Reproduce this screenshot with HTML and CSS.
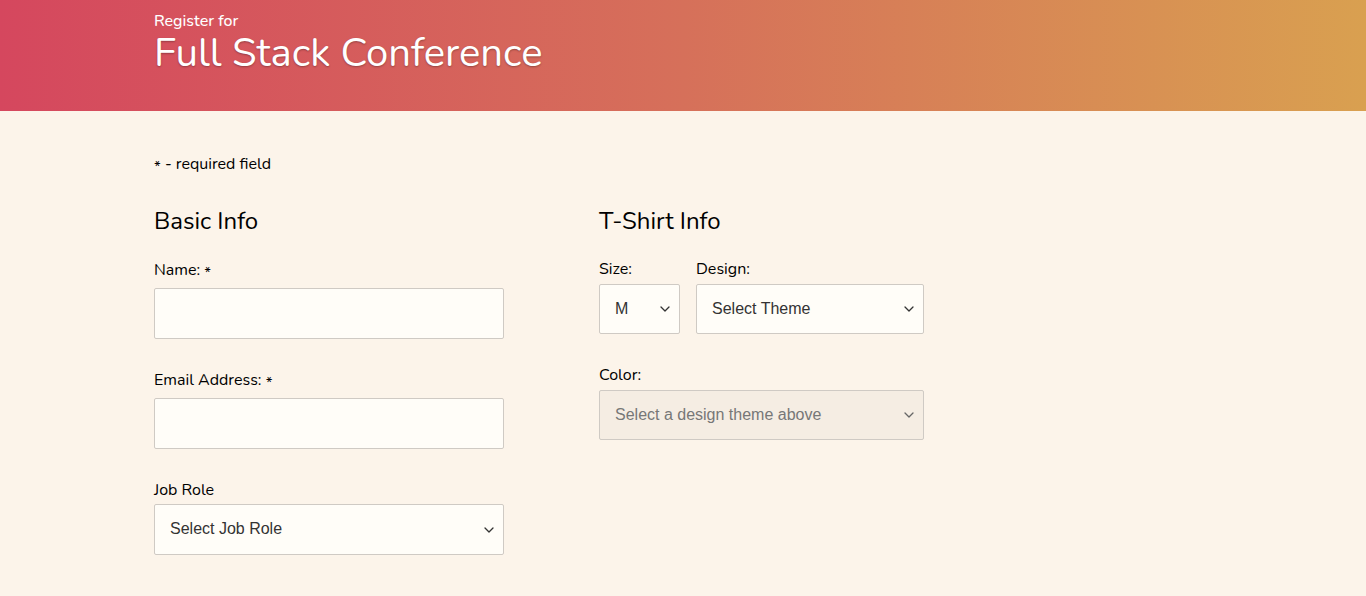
FILE: index.html
```html
<!DOCTYPE html>
<html lang="en">
<head>
<meta charset="utf-8">
<title>Register for Full Stack Conference</title>
<link rel="stylesheet" href="styles.css">
</head>
<body>
<header class="hero">
  <div class="wrap">
    <p class="kicker">Register for</p>
    <h1 class="title">Full Stack Conference</h1>
  </div>
</header>
<main class="wrap">
  <p class="note"><span class="ast">*</span> - required field</p>
  <form class="form">
    <section class="col col-basic">
      <h2 class="heading">Basic Info</h2>
      <div class="field">
        <label class="label">Name: <span class="ast">*</span></label>
        <input class="input" type="text">
      </div>
      <div class="field">
        <label class="label">Email Address: <span class="ast">*</span></label>
        <input class="input" type="text">
      </div>
      <div class="field field-last">
        <label class="label">Job Role</label>
        <div class="select-wrap">
          <select class="select"><option>Select Job Role</option></select>
          <svg class="chev" width="10" height="6" viewBox="0 0 10 6"><path d="M1 1l4 4 4-4" fill="none" stroke="#333" stroke-width="1.3" stroke-linecap="round" stroke-linejoin="round"/></svg>
        </div>
      </div>
    </section>
    <section class="col col-shirt">
      <h2 class="heading">T-Shirt Info</h2>
      <div class="row">
        <div class="field sm">
          <label class="label">Size:</label>
          <div class="select-wrap size">
            <select class="select"><option>M</option></select>
            <svg class="chev" width="10" height="6" viewBox="0 0 10 6"><path d="M1 1l4 4 4-4" fill="none" stroke="#333" stroke-width="1.3" stroke-linecap="round" stroke-linejoin="round"/></svg>
          </div>
        </div>
        <div class="field sm">
          <label class="label">Design:</label>
          <div class="select-wrap design">
            <select class="select"><option>Select Theme</option></select>
            <svg class="chev" width="10" height="6" viewBox="0 0 10 6"><path d="M1 1l4 4 4-4" fill="none" stroke="#333" stroke-width="1.3" stroke-linecap="round" stroke-linejoin="round"/></svg>
          </div>
        </div>
      </div>
      <div class="field sm">
        <label class="label">Color:</label>
        <div class="select-wrap color">
          <select class="select disabled" disabled><option>Select a design theme above</option></select>
          <svg class="chev" width="10" height="6" viewBox="0 0 10 6"><path d="M1 1l4 4 4-4" fill="none" stroke="#666" stroke-width="1.3" stroke-linecap="round" stroke-linejoin="round"/></svg>
        </div>
      </div>
    </section>
  </form>
</main>
</body>
</html>
```

FILE: styles.css
```css
* { box-sizing: border-box; }
html, body { margin: 0; padding: 0; }
body {
  background: #fcf4ea;
  font-family: "Nunito", Lato, "Noto Sans", sans-serif;
  color: #000;
}
.wrap {
  padding-left: 154px;
}
.hero {
  height: 111px;
  background: linear-gradient(to right, #d5475e 0%, #d6705a 50%, #d9a050 100%);
  color: #fff;
}
.hero .wrap { padding-top: 11px; }
.kicker {
  margin: 0;
  font-size: 16px;
  line-height: 20px;
  font-weight: 500;
}
.title {
  margin: 0;
  font-size: 40px;
  line-height: 44px;
  font-weight: 400;
  text-shadow: 0 1px 2px rgba(0,0,0,0.3);
}
.note {
  margin: 42px 0 0;
  font-size: 16px;
  line-height: 22px;
}
.ast {
  font-size: 15px;
  vertical-align: -3px;
  line-height: 1;
}
.form {
  display: flex;
  margin-top: 30px;
}
.col-basic { width: 445px; }
.col-shirt { width: 325px; }
.heading {
  margin: 0 0 22px;
  font-size: 24px;
  line-height: 32px;
  font-weight: 400;
}
.field { margin-bottom: 30px; }
.label {
  display: block;
  font-size: 16px;
  line-height: 22px;
  margin-bottom: 7px;
}
.field-last .label { margin-bottom: 3px; }
.input {
  display: block;
  width: 350px;
  height: 51px;
  border: 1px solid #cfcac4;
  border-radius: 2px;
  background: #fffdf8;
  margin: 0;
}
.select-wrap {
  position: relative;
  width: 350px;
  height: 51px;
}
.select {
  -webkit-appearance: none;
  appearance: none;
  width: 100%;
  height: 100%;
  margin: 0;
  border: 1px solid #cfcac4;
  border-radius: 2px;
  background: #fffdf8;
  font-family: "Liberation Sans", Arial, sans-serif;
  font-size: 16px;
  color: #333;
  padding: 0 15px 2px;
}
.select.disabled {
  background: #f5ede3;
  color: #777;
  opacity: 1;
}
.chev {
  position: absolute;
  right: 10px;
  top: 50%;
  margin-top: -3px;
  pointer-events: none;
}
.row {
  display: flex;
  gap: 16px;
  margin-top: -1px;
}
.field.sm .label { margin-bottom: 4px; }
.select-wrap.size { width: 81px; height: 50px; }
.select-wrap.design { width: 228px; height: 50px; }
.select-wrap.color { width: 325px; height: 50px; }
.field-last { margin-bottom: 0; }
```
